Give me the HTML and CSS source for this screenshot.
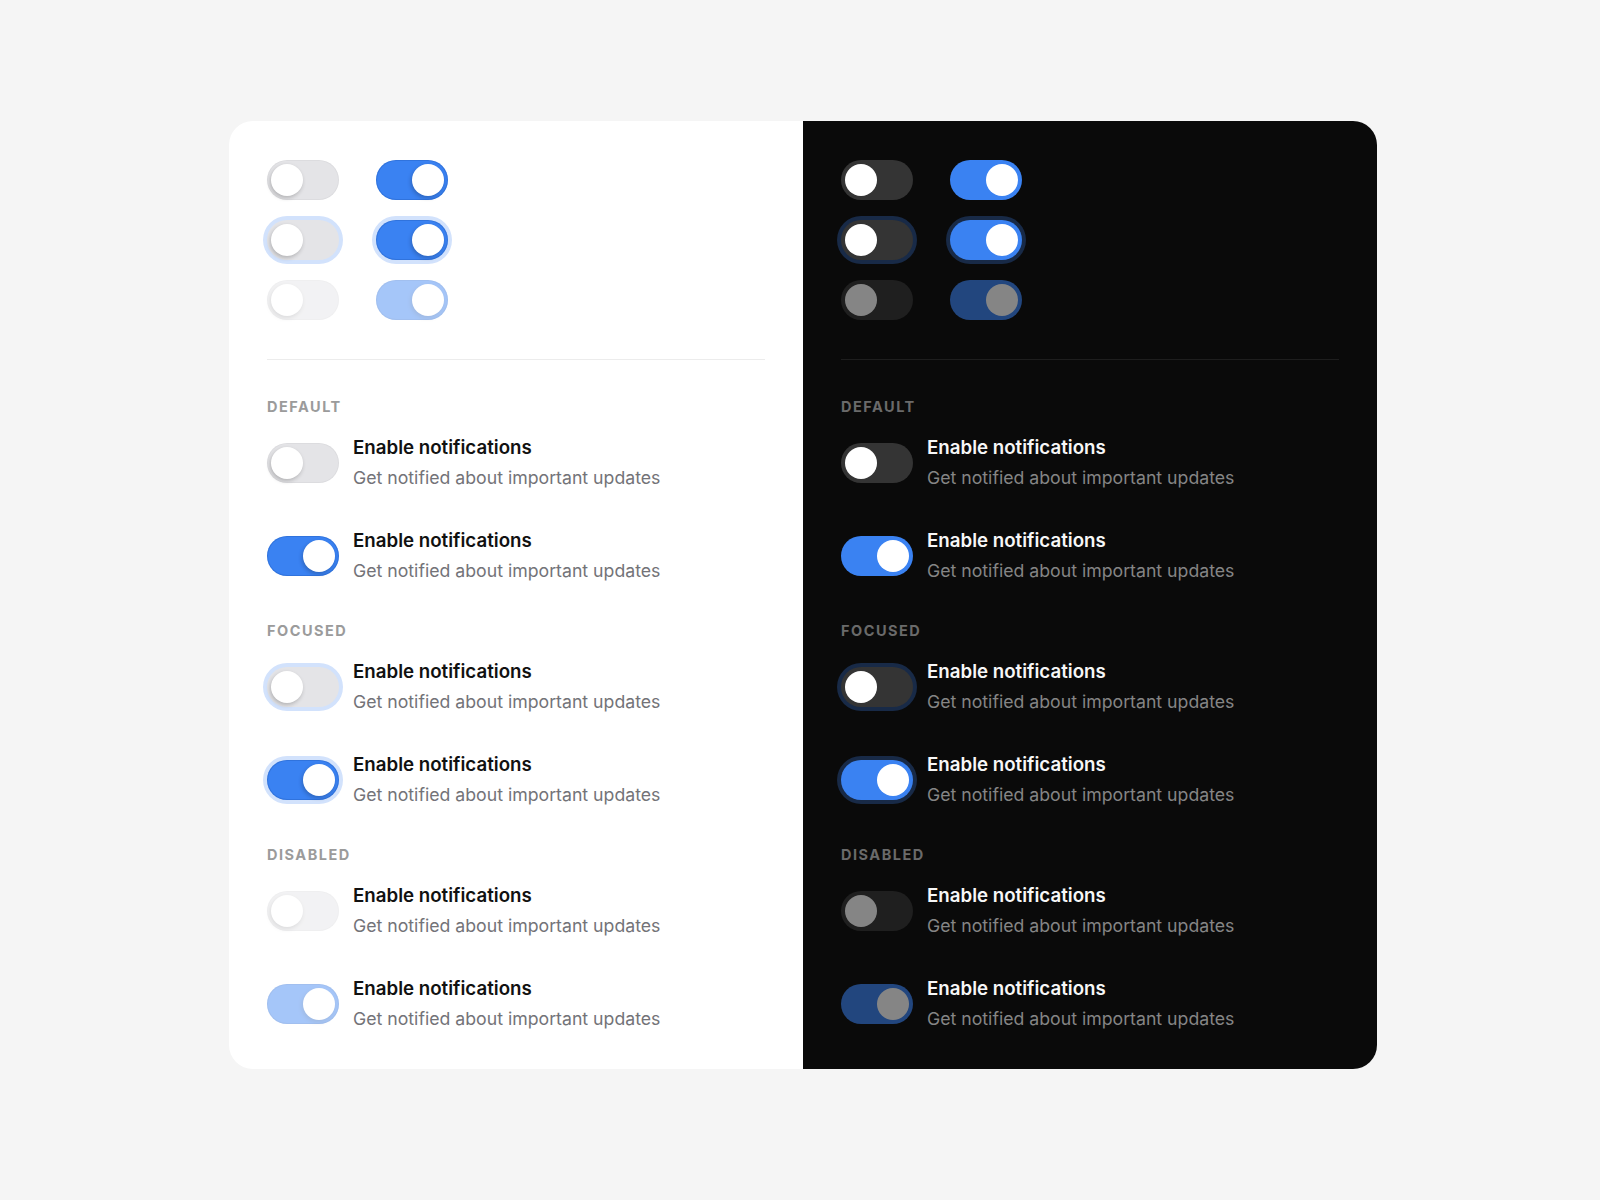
FILE: index.html
```html
<!DOCTYPE html>
<html lang="en">
  <head>
    <meta charset="UTF-8" />
    <meta name="viewport" content="width=device-width, initial-scale=1.0" />
    <title>Switch States</title>
    <link rel="stylesheet" href="styles.css">
  </head>
  <body>
    <div class="page">
      <div class="card">
        <!-- light theme -->
        <section class="panel light">
          <div class="states">
            <button class="switch" role="switch" aria-checked="false"><span class="knob"></span></button>
            <button class="switch on" role="switch" aria-checked="true"><span class="knob"></span></button>
            <button class="switch focus" role="switch" aria-checked="false"><span class="knob"></span></button>
            <button class="switch on focus" role="switch" aria-checked="true"><span class="knob"></span></button>
            <button class="switch" role="switch" aria-checked="false" disabled><span class="knob"></span></button>
            <button class="switch on" role="switch" aria-checked="true" disabled><span class="knob"></span></button>
          </div>
          <hr class="divider" />

          <div class="group">
            <h4 class="label">Default</h4>
            <div class="option">
              <button class="switch" role="switch" aria-checked="false"><span class="knob"></span></button>
              <div class="text">
                <div class="title">Enable notifications</div>
                <div class="desc">Get notified about important updates</div>
              </div>
            </div>
            <div class="option">
              <button class="switch on" role="switch" aria-checked="true"><span class="knob"></span></button>
              <div class="text">
                <div class="title">Enable notifications</div>
                <div class="desc">Get notified about important updates</div>
              </div>
            </div>
          </div>

          <div class="group">
            <h4 class="label">Focused</h4>
            <div class="option">
              <button class="switch focus" role="switch" aria-checked="false"><span class="knob"></span></button>
              <div class="text">
                <div class="title">Enable notifications</div>
                <div class="desc">Get notified about important updates</div>
              </div>
            </div>
            <div class="option">
              <button class="switch on focus" role="switch" aria-checked="true"><span class="knob"></span></button>
              <div class="text">
                <div class="title">Enable notifications</div>
                <div class="desc">Get notified about important updates</div>
              </div>
            </div>
          </div>

          <div class="group">
            <h4 class="label">Disabled</h4>
            <div class="option">
              <button class="switch" role="switch" aria-checked="false" disabled><span class="knob"></span></button>
              <div class="text">
                <div class="title">Enable notifications</div>
                <div class="desc">Get notified about important updates</div>
              </div>
            </div>
            <div class="option">
              <button class="switch on" role="switch" aria-checked="true" disabled><span class="knob"></span></button>
              <div class="text">
                <div class="title">Enable notifications</div>
                <div class="desc">Get notified about important updates</div>
              </div>
            </div>
          </div>
        </section>

        <!-- dark theme -->
        <section class="panel dark">
          <div class="states">
            <button class="switch" role="switch" aria-checked="false"><span class="knob"></span></button>
            <button class="switch on" role="switch" aria-checked="true"><span class="knob"></span></button>
            <button class="switch focus" role="switch" aria-checked="false"><span class="knob"></span></button>
            <button class="switch on focus" role="switch" aria-checked="true"><span class="knob"></span></button>
            <button class="switch" role="switch" aria-checked="false" disabled><span class="knob"></span></button>
            <button class="switch on" role="switch" aria-checked="true" disabled><span class="knob"></span></button>
          </div>
          <hr class="divider" />

          <div class="group">
            <h4 class="label">Default</h4>
            <div class="option">
              <button class="switch" role="switch" aria-checked="false"><span class="knob"></span></button>
              <div class="text">
                <div class="title">Enable notifications</div>
                <div class="desc">Get notified about important updates</div>
              </div>
            </div>
            <div class="option">
              <button class="switch on" role="switch" aria-checked="true"><span class="knob"></span></button>
              <div class="text">
                <div class="title">Enable notifications</div>
                <div class="desc">Get notified about important updates</div>
              </div>
            </div>
          </div>

          <div class="group">
            <h4 class="label">Focused</h4>
            <div class="option">
              <button class="switch focus" role="switch" aria-checked="false"><span class="knob"></span></button>
              <div class="text">
                <div class="title">Enable notifications</div>
                <div class="desc">Get notified about important updates</div>
              </div>
            </div>
            <div class="option">
              <button class="switch on focus" role="switch" aria-checked="true"><span class="knob"></span></button>
              <div class="text">
                <div class="title">Enable notifications</div>
                <div class="desc">Get notified about important updates</div>
              </div>
            </div>
          </div>

          <div class="group">
            <h4 class="label">Disabled</h4>
            <div class="option">
              <button class="switch" role="switch" aria-checked="false" disabled><span class="knob"></span></button>
              <div class="text">
                <div class="title">Enable notifications</div>
                <div class="desc">Get notified about important updates</div>
              </div>
            </div>
            <div class="option">
              <button class="switch on" role="switch" aria-checked="true" disabled><span class="knob"></span></button>
              <div class="text">
                <div class="title">Enable notifications</div>
                <div class="desc">Get notified about important updates</div>
              </div>
            </div>
          </div>
        </section>
      </div>
    </div>
  </body>
</html>
```

FILE: styles.css
```css
body {
  margin: 0;
  background-color: #f5f5f5;
  font-family: Inter, "Noto Sans", sans-serif;
}
.page {
  padding: 121px 0 0 229px;
}
.card {
  display: grid;
  grid-template-columns: 1fr 1fr;
  width: 1148px;
  border-radius: 24px;
  overflow: hidden;
}
.panel {
  padding: 39px 38px 38px;
}
.panel.light {
  background: #ffffff;
}
.panel.dark {
  background: #0a0a0a;
}

/* top overview: off / on per state */
.states {
  display: grid;
  grid-template-columns: repeat(2, 72px);
  column-gap: 37px;
  row-gap: 20px;
}
.divider {
  border: none;
  height: 1px;
  margin: 39px 0 37px;
  background: #ececec;
}
.dark .divider {
  background: #1e1e1e;
}

.group {
  margin-bottom: 38px;
}
.group:last-child {
  margin-bottom: 0;
}
.label {
  margin: 0 0 19px;
  font-size: 14.5px;
  line-height: 20px;
  font-weight: 700;
  letter-spacing: 1.5px;
  text-transform: uppercase;
  color: #9b9b9b;
}
.dark .label {
  color: #6a6a6a;
}
.option {
  display: flex;
  align-items: center;
  gap: 14px;
  margin-bottom: 39px;
}
.option:last-child {
  margin-bottom: 0;
}
.title {
  font-size: 18.7px;
  line-height: 24px;
  font-weight: 600;
  color: #111111;
}
.desc {
  margin-top: 6px;
  font-size: 17.7px;
  line-height: 24px;
  color: #737378;
}
.dark .title {
  color: #f7f7f7;
}
.dark .desc {
  color: #858585;
}

/* switch */
.switch {
  flex: none;
  display: flex;
  align-items: center;
  width: 72px;
  height: 40px;
  padding: 4px;
  border: none;
  border-radius: 20px;
  background: #e4e4e7;
  box-shadow: inset 0 0 0 1px rgba(0, 0, 0, 0.03);
  cursor: pointer;
}
.switch .knob {
  width: 32px;
  height: 32px;
  border-radius: 50%;
  background: #ffffff;
  box-shadow: -1px 2px 4px rgba(0, 0, 0, 0.22);
}
.switch.on {
  justify-content: flex-end;
  background: #3a82f2;
  box-shadow: inset 0 0 0 1px rgba(20, 70, 160, 0.25);
}
.switch.focus {
  box-shadow: 0 0 0 4px #d2e2fc;
}
.switch.on.focus {
  box-shadow: inset 0 0 0 1px rgba(20, 70, 160, 0.25), 0 0 0 4px #d2e2fc;
}
.switch:disabled {
  opacity: 0.45;
  cursor: default;
}

.dark .switch {
  background: #343434;
  box-shadow: none;
}
.dark .switch .knob {
  box-shadow: none;
}
.dark .switch.on {
  background: #3a82f2;
}
.dark .switch.focus {
  box-shadow: 0 0 0 4px #182a47;
}
.dark .switch:disabled {
  opacity: 0.5;
}
```
